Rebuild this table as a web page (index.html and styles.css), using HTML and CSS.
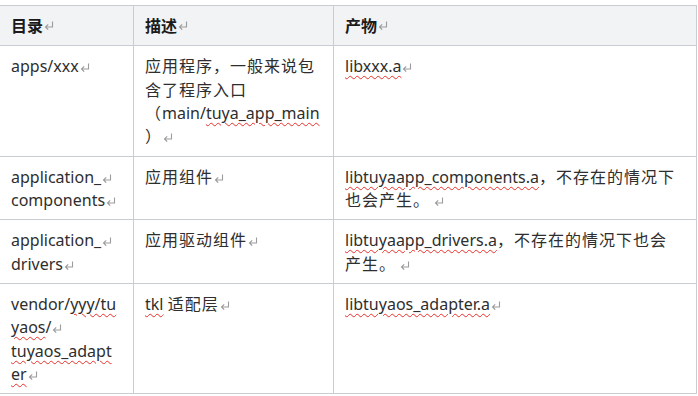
FILE: index.html
```html
<!DOCTYPE html>
<html lang="zh-CN">
<head>
<meta charset="utf-8">
<link rel="stylesheet" href="styles.css">
</head>
<body>
<table class="grid">
  <colgroup>
    <col class="c1">
    <col class="c2">
    <col class="c3">
  </colgroup>
  <thead>
    <tr>
      <th><span class="zh">目录</span><svg class="pm" viewBox="0 0 10 9"><path d="M8.5 0.5V6H1.5M4.2 3.3L1.5 6L4.2 8.7"/></svg></th>
      <th><span class="zh">描述</span><svg class="pm" viewBox="0 0 10 9"><path d="M8.5 0.5V6H1.5M4.2 3.3L1.5 6L4.2 8.7"/></svg></th>
      <th><span class="zh">产物</span><svg class="pm" viewBox="0 0 10 9"><path d="M8.5 0.5V6H1.5M4.2 3.3L1.5 6L4.2 8.7"/></svg></th>
    </tr>
  </thead>
  <tbody>
    <tr>
      <td>apps/xxx<svg class="pm" viewBox="0 0 10 9"><path d="M8.5 0.5V6H1.5M4.2 3.3L1.5 6L4.2 8.7"/></svg></td>
      <td><span class="zh">应用程序，一般来说包</span><br><span class="zh">含了程序入口</span><br><span class="zh">（</span>main/<span class="sp">tuya_app_main</span><br><span class="zh">）</span><svg class="pm" viewBox="0 0 10 9"><path d="M8.5 0.5V6H1.5M4.2 3.3L1.5 6L4.2 8.7"/></svg></td>
      <td><span class="sp">libxxx.a</span><svg class="pm" viewBox="0 0 10 9"><path d="M8.5 0.5V6H1.5M4.2 3.3L1.5 6L4.2 8.7"/></svg></td>
    </tr>
    <tr>
      <td>application_<svg class="pm" viewBox="0 0 10 9"><path d="M8.5 0.5V6H1.5M4.2 3.3L1.5 6L4.2 8.7"/></svg><br>components<svg class="pm" viewBox="0 0 10 9"><path d="M8.5 0.5V6H1.5M4.2 3.3L1.5 6L4.2 8.7"/></svg></td>
      <td><span class="zh">应用组件</span><svg class="pm" viewBox="0 0 10 9"><path d="M8.5 0.5V6H1.5M4.2 3.3L1.5 6L4.2 8.7"/></svg></td>
      <td><span class="sp">libtuyaapp_components.a</span><span class="zh">，不存在的情况下</span><br><span class="zh">也会产生。</span><svg class="pm pm-gap" viewBox="0 0 10 9"><path d="M8.5 0.5V6H1.5M4.2 3.3L1.5 6L4.2 8.7"/></svg></td>
    </tr>
    <tr>
      <td>application_<svg class="pm" viewBox="0 0 10 9"><path d="M8.5 0.5V6H1.5M4.2 3.3L1.5 6L4.2 8.7"/></svg><br>drivers<svg class="pm" viewBox="0 0 10 9"><path d="M8.5 0.5V6H1.5M4.2 3.3L1.5 6L4.2 8.7"/></svg></td>
      <td><span class="zh">应用驱动组件</span><svg class="pm" viewBox="0 0 10 9"><path d="M8.5 0.5V6H1.5M4.2 3.3L1.5 6L4.2 8.7"/></svg></td>
      <td><span class="sp">libtuyaapp_drivers.a</span><span class="zh">，不存在的情况下也会</span><br><span class="zh">产生。</span><svg class="pm pm-gap" viewBox="0 0 10 9"><path d="M8.5 0.5V6H1.5M4.2 3.3L1.5 6L4.2 8.7"/></svg></td>
    </tr>
    <tr>
      <td>vendor/<span class="sp">yyy/tu</span><br><span class="sp">yaos</span>/<svg class="pm" viewBox="0 0 10 9"><path d="M8.5 0.5V6H1.5M4.2 3.3L1.5 6L4.2 8.7"/></svg><br><span class="sp">tuyaos_adapt</span><br><span class="sp">er</span><svg class="pm" viewBox="0 0 10 9"><path d="M8.5 0.5V6H1.5M4.2 3.3L1.5 6L4.2 8.7"/></svg></td>
      <td><span class="sp">tkl</span> <span class="zh">适配层</span><svg class="pm" viewBox="0 0 10 9"><path d="M8.5 0.5V6H1.5M4.2 3.3L1.5 6L4.2 8.7"/></svg></td>
      <td><span class="sp">libtuyaos_adapter.a</span><svg class="pm" viewBox="0 0 10 9"><path d="M8.5 0.5V6H1.5M4.2 3.3L1.5 6L4.2 8.7"/></svg></td>
    </tr>
  </tbody>
</table>
</body>
</html>
```

FILE: styles.css
```css
html, body {
  margin: 0;
  padding: 0;
  background: #ffffff;
}

body {
  padding-top: 5px;
  font-family: "Noto Sans", "Noto Sans CJK SC", sans-serif;
  font-size: 16px;
  color: #2e2e2e;
  overflow: hidden;
}

.grid {
  border-collapse: collapse;
  table-layout: fixed;
  width: 697px;
  margin-left: -1px;
}

.c1 { width: 134px; }
.c2 { width: 200px; }
.c3 { width: 363px; }

.grid th,
.grid td {
  border: 1px solid #c9ccd2;
  padding: 9px 11px 7px 11px;
  line-height: 23.33px;
  text-align: left;
  vertical-align: top;
  white-space: nowrap;
}

.grid th {
  background: #f2f3f5;
  font-weight: 700;
  color: #1a1a1a;
}

.zh {
  letter-spacing: 1px;
}

.grid th .zh {
  letter-spacing: 0;
}

.sp {
  text-decoration-line: underline;
  text-decoration-style: wavy;
  text-decoration-color: #e8302a;
  text-decoration-thickness: 1px;
  text-underline-offset: 3px;
}

.pm {
  width: 10px;
  height: 9px;
  margin-left: 1px;
  vertical-align: 0;
  fill: none;
  stroke: #9c9c9c;
  stroke-width: 1.1;
}

.grid th .pm {
  vertical-align: 2px;
}

.pm-gap {
  margin-left: 4px;
}
```
